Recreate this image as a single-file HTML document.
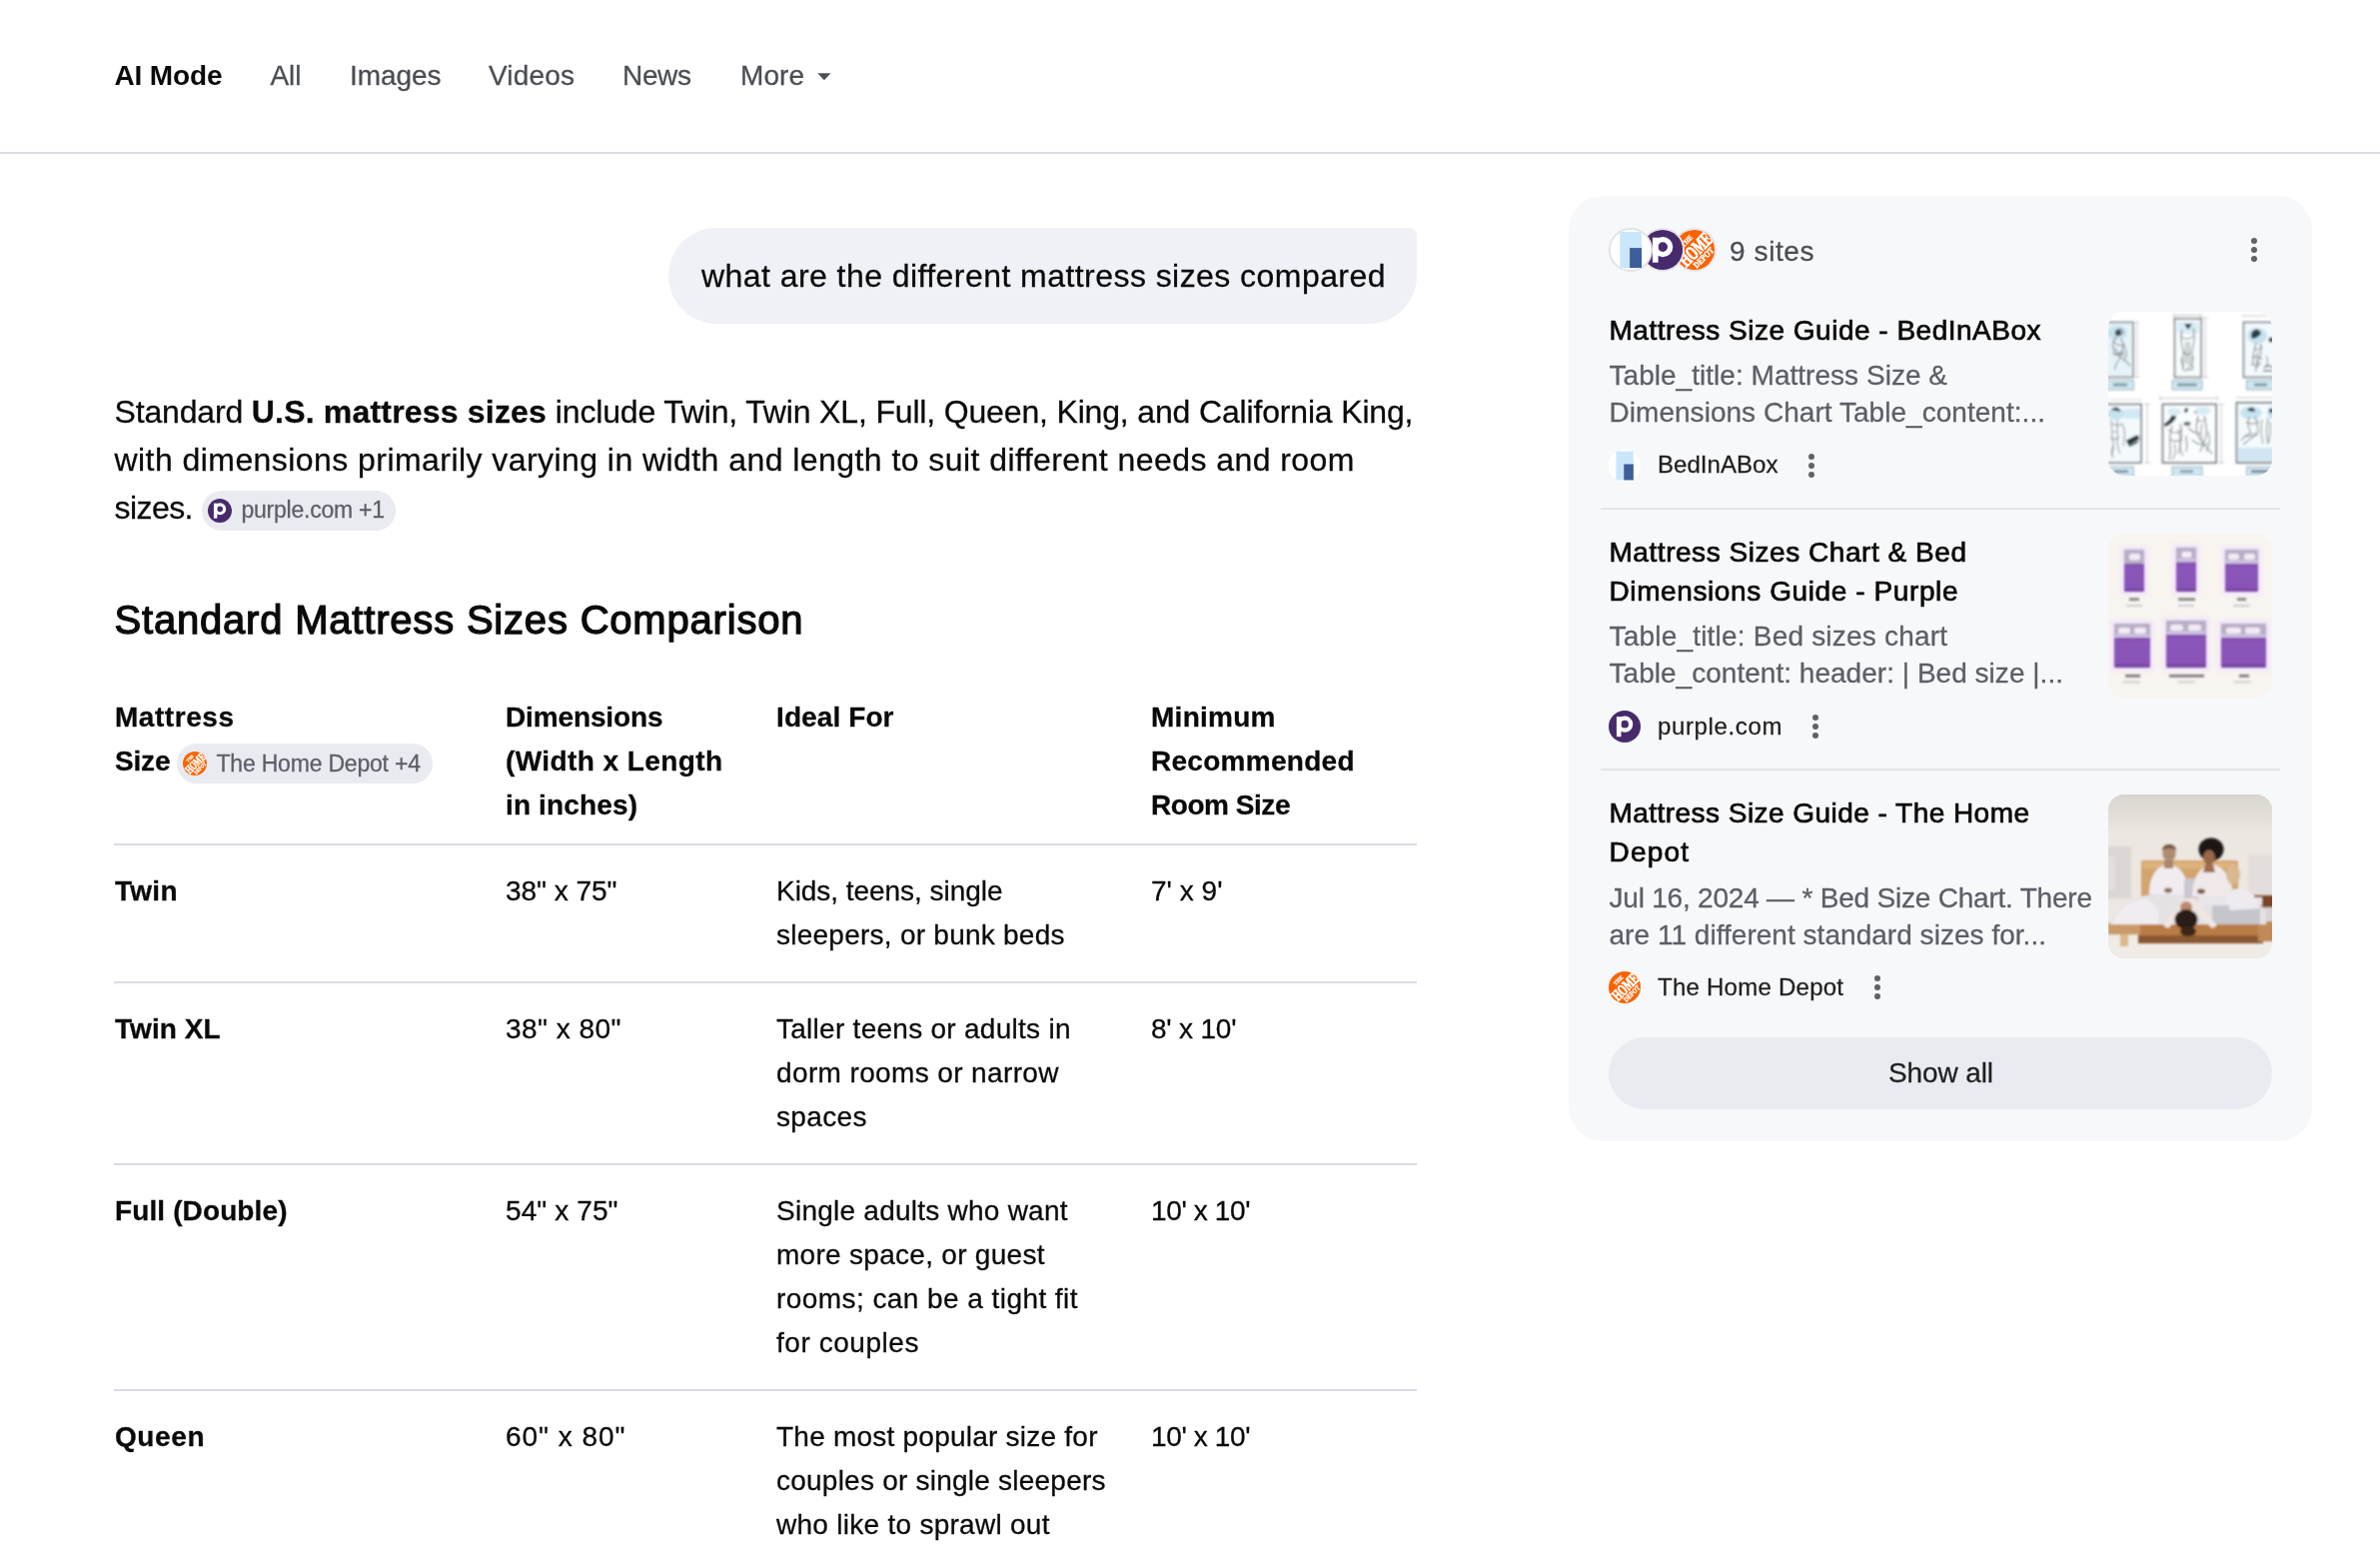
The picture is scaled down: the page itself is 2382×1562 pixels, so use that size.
<!DOCTYPE html>
<html lang="en">
<head>
<meta charset="utf-8">
<title>what are the different mattress sizes compared - AI Mode</title>
<style>
html,body{margin:0;padding:0;background:#fff;}
body{width:2382px;height:1562px;position:relative;overflow:hidden;font-family:"Liberation Sans",Arial,sans-serif;}
.t{position:absolute;white-space:nowrap;line-height:1;margin:0;padding:0;}
#page{position:absolute;left:0;top:0;width:2382px;height:1562px;will-change:transform;}
.abs{position:absolute;}
.hr{position:absolute;height:2px;background:#dadbe7;}
.chip{position:absolute;height:40px;border-radius:20px;background:#e9ebf0;}
.panel{position:absolute;left:1570px;top:196px;width:744px;height:946px;border-radius:34px;background:#f7f8fa;}
.thumb{position:absolute;left:2110px;width:164px;height:164px;border-radius:16px;overflow:hidden;}
.thumb svg{display:block;}
.fav{position:absolute;border-radius:50%;overflow:hidden;}
.dots{position:absolute;width:8px;height:28px;}
.dots i{position:absolute;left:1px;width:6px;height:6px;border-radius:50%;background:#5f6368;}
.dots i:nth-child(1){top:0;} .dots i:nth-child(2){top:9px;} .dots i:nth-child(3){top:18px;}
</style>
</head>
<body>
<div id="page">
<svg width="0" height="0" style="position:absolute">
  <defs>
    <symbol id="ic-purple" viewBox="-20 -20 40 40">
      <circle r="20" fill="#472a6c"/>
      <circle cx="0.2" cy="-2.9" r="7.45" fill="none" stroke="#fff" stroke-width="5.3"/>
      <rect x="-10.1" y="-12.3" width="5.7" height="25" fill="#fff"/>
    </symbol>
    <symbol id="ic-hd" viewBox="-20 -20 40 40">
      <clipPath id="hdclip"><circle r="20"/></clipPath>
      <circle r="20" fill="#fa6304"/>
      <g clip-path="url(#hdclip)"><g transform="rotate(-45)" fill="#fff" stroke="#fff" stroke-width="0.45" font-family="'Liberation Serif',serif" font-weight="700" text-anchor="middle">
        <text x="0.5" y="-9.4" font-size="7.2" stroke-width="0.3" textLength="13.5" lengthAdjust="spacingAndGlyphs">THE</text>
        <text x="0.8" y="6.8" font-size="19.6" stroke-width="0.95" textLength="38.5" lengthAdjust="spacingAndGlyphs">HOME</text>
        <text x="0.8" y="14.8" font-size="9.0" stroke-width="0.4" textLength="25" lengthAdjust="spacingAndGlyphs">DEPOT</text>
      </g></g>
    </symbol>
    <symbol id="ic-bed" viewBox="-20 -20 40 40">
      <circle r="20" fill="#fff"/>
      <rect x="-10.7" y="-18" width="21.7" height="36" fill="#c9e6fb"/>
      <rect x="-0.9" y="-1.9" width="11.9" height="19.9" fill="#3d5d9b"/>
    </symbol>
  </defs>
</svg>

<!-- top nav -->
<div class="hr" style="left:0;top:152px;width:2382px;background:#dadce8;"></div>
<svg class="abs" style="left:818px;top:73px" width="14" height="8" viewBox="0 0 14 8"><path d="M0.3 0.2h13.2L6.9 7.2z" fill="#4d5156"/></svg>

<!-- query bubble -->
<div class="abs" style="left:669px;top:228px;width:749px;height:96px;border-radius:48px 8px 48px 48px;background:#eff1f6;"></div>

<!-- citation chips -->
<div class="chip" style="left:202px;top:491px;width:194px;"></div>
<svg class="abs" style="left:208px;top:499px" width="24" height="24"><use href="#ic-purple"/></svg>
<div class="chip" style="left:177px;top:744px;width:256px;"></div>
<svg class="abs" style="left:183px;top:752px" width="24" height="24"><use href="#ic-hd"/></svg>

<!-- table rules -->
<div class="hr" style="left:114px;top:844px;width:1304px;"></div>
<div class="hr" style="left:114px;top:982px;width:1304px;"></div>
<div class="hr" style="left:114px;top:1164px;width:1304px;"></div>
<div class="hr" style="left:114px;top:1390px;width:1304px;"></div>

<!-- sources panel -->
<div class="panel"></div>
<svg class="abs" style="left:1608px;top:226px" width="114" height="48" viewBox="1608 226 114 48">
  <circle cx="1696" cy="250" r="21" fill="none" stroke="#e5e6ed" stroke-width="2"/>
  <use href="#ic-hd" x="1676" y="230" width="40" height="40"/>
  <circle cx="1664" cy="250" r="21" fill="none" stroke="#e5e5ed" stroke-width="2"/>
  <use href="#ic-purple" x="1644" y="230" width="40" height="40"/>
  <circle cx="1632" cy="250" r="21" fill="#fff" stroke="#e2e1e9" stroke-width="2"/>
  <use href="#ic-bed" x="1612" y="230" width="40" height="40"/>
</svg>
<div class="dots" style="left:2252px;top:238px;"><i></i><i></i><i></i></div>

<div class="hr" style="left:1602px;top:508px;width:680px;background:#e4e5eb;"></div>
<div class="hr" style="left:1602px;top:769px;width:680px;background:#e4e5eb;"></div>

<svg class="abs" style="left:1610px;top:450px" width="32" height="32"><use href="#ic-bed"/></svg>
<div class="dots" style="left:1809px;top:454px;"><i></i><i></i><i></i></div>
<svg class="abs" style="left:1610px;top:711px" width="32" height="32"><use href="#ic-purple"/></svg>
<div class="dots" style="left:1813px;top:715px;"><i></i><i></i><i></i></div>
<svg class="abs" style="left:1610px;top:972px" width="32" height="32"><use href="#ic-hd"/></svg>
<div class="dots" style="left:1875px;top:976px;"><i></i><i></i><i></i></div>

<div class="abs" style="left:1610px;top:1038px;width:664px;height:72px;border-radius:36px;background:#e9ebf0;"></div>

<!-- thumbnail 1: line-art sleeping positions -->
<div class="thumb" style="top:312px;background:#fff;">
<svg width="164" height="164" viewBox="0 0 164 164">
  <defs><filter id="b1" x="-5%" y="-5%" width="110%" height="110%"><feGaussianBlur stdDeviation="0.85"/></filter></defs>
  <rect width="164" height="164" fill="#fff"/>
  <g filter="url(#b1)">
    <!-- bed 1 -->
    <rect x="-6" y="10.5" width="31" height="55" fill="#e6f3f9" stroke="#7f858b" stroke-width="1.6"/>
    <ellipse cx="9" cy="21" rx="10" ry="7" fill="#c6e3f0"/>
    <path d="M29 10v56M25 10.5h6M25 65.5h6" stroke="#c5c8ca" stroke-width="1" fill="none"/>
    <path d="M9 18c4-3 7 1 5 5M8 25c-4 5-5 12 0 17c4 4 9 6 14 12M13 27c3 6 2 12-2 16M4 42c4 2 9 1 12-2" stroke="#8f959a" stroke-width="1.3" fill="none"/>
    <circle cx="10" cy="21" r="3.2" fill="#3c4a52"/>
    <rect x="-4" y="68.5" width="29.5" height="9.5" fill="#cde6f1" stroke="#9fb6c0" stroke-width="1"/>
    <rect x="5" y="71.7" width="14" height="2.6" fill="#7f8f98"/>
    <!-- bed 2 -->
    <path d="M66 2v5M93 2v5M66 3.5h27" stroke="#b9bcbe" stroke-width="1" fill="none"/>
    <rect x="66.5" y="7" width="26.5" height="58.5" fill="#f7fbfd" stroke="#7f858b" stroke-width="1.7"/>
    <rect x="69" y="10" width="21.5" height="12" rx="3" fill="#d9edf5"/>
    <path d="M97 6v60M94 6h6M94 65.5h6" stroke="#c5c8ca" stroke-width="1" fill="none"/>
    <path d="M76 12l4 6l4-6z" fill="#2d3a42"/>
    <path d="M74 18c-2 8-1 14 1 20v18M85 16c2 8 1 16-1 22v16M78 30v22M81 30v24M74 56c2 4 5 4 6 0c2 4 5 3 5-2" stroke="#8f959a" stroke-width="1.2" fill="none"/>
    <rect x="64" y="68.5" width="30" height="9.5" fill="#cde6f1" stroke="#9fb6c0" stroke-width="1"/>
    <rect x="69" y="71.7" width="20" height="2.6" fill="#7f8f98"/>
    <!-- bed 3 -->
    <path d="M134 4h30" stroke="#c5c8ca" stroke-width="1"/>
    <rect x="135.5" y="10.5" width="34" height="55" fill="#f3f9fc" stroke="#7f858b" stroke-width="1.7"/>
    <ellipse cx="149" cy="24" rx="10" ry="8" fill="#c6e3f0"/>
    <path d="M143 22c2-6 9-6 10 0c-3 3-6 6-10 4z" fill="#2f3d47"/>
    <circle cx="163" cy="28" r="2.5" fill="#2f3d47"/>
    <path d="M148 31c-2 8-4 14-3 22M152 32c2 6 1 12-2 18c-2 4-3 8-2 10M144 46c4-2 8-1 10 2" stroke="#8f959a" stroke-width="1.2" fill="none"/>
    <path d="M156 56c2-3 6-3 8 0M155 59h9" stroke="#6c757b" stroke-width="1.4" fill="none"/>
    <rect x="138.5" y="68.5" width="30" height="9.5" fill="#cde6f1" stroke="#9fb6c0" stroke-width="1"/>
    <rect x="146" y="71.7" width="13" height="2.6" fill="#7f8f98"/>
    <!-- bed 4 -->
    <path d="M0 88h34" stroke="#d9d9d6" stroke-width="1"/>
    <rect x="-6" y="92.5" width="39" height="58.5" fill="#f4fafc" stroke="#7f858b" stroke-width="1.8"/>
    <ellipse cx="8" cy="102" rx="9" ry="6" fill="#c6e3f0"/>
    <rect x="16" y="97" width="16" height="10" rx="3" fill="#d3e9f3"/>
    <path d="M3 98c3-4 9-3 9 2z" fill="#3a4850"/>
    <path d="M39 92v60M36 92.5h6M36 151h6" stroke="#c5c8ca" stroke-width="1" fill="none"/>
    <path d="M3 108c1 8 0 14 2 22c1 6 0 10-2 14M9 108c0 8 1 14 0 20c0 6 1 10 3 14M3 120h7" stroke="#a0a5a8" stroke-width="1.2" fill="none"/>
    <path d="M19 129l10-5l1.5 3l-10 5.5zM21 134.5l9-4.5" stroke="#27343b" stroke-width="1.6" fill="#27343b"/>
    <rect x="-4" y="155" width="29.5" height="12" fill="#cde6f1" stroke="#9fb6c0" stroke-width="1"/>
    <rect x="6" y="158.5" width="14" height="2.6" fill="#7f8f98"/>
    <!-- bed 5 -->
    <path d="M52 84v5M109 84v5M52 86.5h57" stroke="#c5c8ca" stroke-width="1" fill="none"/>
    <rect x="54.5" y="92.5" width="53.5" height="58.5" fill="#fafdfe" stroke="#7f858b" stroke-width="1.9"/>
    <path d="M113 92v60M110 92.5h6M110 151h6" stroke="#c5c8ca" stroke-width="1" fill="none"/>
    <path d="M56 112c3-2 6-4 7-8c2-2 5-1 5 2c-2 3-5 7-11 9z" fill="#2c3a42"/>
    <ellipse cx="78" cy="98.5" rx="1.8" ry="2.6" fill="#2c3a42" transform="rotate(25 78 98.5)"/>
    <path d="M86 101c2-5 9-5 10 0c-3 1-7 1-10 0z" fill="#2c3a42"/>
    <ellipse cx="79" cy="112" rx="3.5" ry="2.2" fill="#6b7379"/>
    <path d="M64 114c-2 8-3 16-2 22c1 5 0 8-1 12M72 112c2 8 2 14 0 20c-1 5 1 9 3 12M62 128c4 2 8 2 12 0" stroke="#8f959a" stroke-width="1.3" fill="none"/>
    <path d="M90 104c-2 8-3 14 0 20c3 6 8 12 14 18M96 104c2 8 3 14 2 20c-1 6-4 10-6 16M80 116c4 4 8 6 12 6M78 124c0 6 2 10 0 16" stroke="#8f959a" stroke-width="1.3" fill="none"/>
    <rect x="64" y="155" width="30" height="12" fill="#cde6f1" stroke="#9fb6c0" stroke-width="1"/>
    <rect x="72" y="158.5" width="13" height="2.6" fill="#8b9aa2"/>
    <!-- bed 6 -->
    <path d="M128 86h40" stroke="#c9ccce" stroke-width="1.2"/>
    <rect x="128.5" y="91" width="42" height="60" fill="#f5fafc" stroke="#7f858b" stroke-width="1.9"/>
    <ellipse cx="143" cy="101" rx="11" ry="6.5" fill="#c6e3f0"/>
    <ellipse cx="165" cy="101" rx="6" ry="6.5" fill="#c6e3f0"/>
    <path d="M139 99c2-5 8-4 8 1z" fill="#33424b"/>
    <circle cx="163" cy="99" r="2.2" fill="#33424b"/>
    <path d="M141 105c-2 8-1 12 2 16c-4 2-8 4-10 8M147 105c2 6 4 12 2 18c-4 2-10 6-14 10M160 106c-2 10-2 18 0 26" stroke="#8f959a" stroke-width="1.2" fill="none"/>
    <rect x="129.5" y="136" width="40" height="13.5" fill="#cfe5f1"/>
    <rect x="138.5" y="155" width="30" height="12" fill="#cde6f1" stroke="#9fb6c0" stroke-width="1"/>
    <rect x="143" y="158.5" width="18" height="2.6" fill="#6f7d85"/>
    <!-- extra sketch density -->
    <g stroke="#8f959a" stroke-width="1.1" fill="none">
      <path d="M6 30c3 4 8 5 11 2M7 36c2 5 6 8 10 8M12 46c-3 4-6 8-5 12M16 34c2 4 3 9 1 14"/>
      <path d="M72 24c2 4 10 4 13 0M76 40c1 4 5 4 6 0M73 46c0 4 1 8 3 10M85 44c0 5-1 9-3 12"/>
      <path d="M146 36c3 3 7 2 8-2M143 52c3 2 7 2 10-1M150 40c-2 6-2 12 0 16M158 44c2 4 2 8 0 12"/>
      <path d="M4 112c3 2 7 2 10 0M2 126c3 2 6 2 9 0M14 112c3 6 3 14 1 22M5 134c-2 4-2 8 0 12"/>
      <path d="M60 118c4 4 10 4 14 0M66 132c2 6 1 12-2 16M70 118c3 8 3 16 0 24M88 108c4 2 8 2 10-1M84 128c4 4 10 6 16 4M94 112c-2 8-1 16 2 22M100 120c2 6 2 14-2 20"/>
      <path d="M138 110c4 3 10 3 13-1M136 124c4 1 9 0 12-3M154 108c-2 8-1 16 1 24M162 110c1 8 0 16-2 22"/>
    </g>
    <g fill="#d8ecf5"><ellipse cx="95" cy="99" rx="8" ry="4"/><ellipse cx="66" cy="100" rx="7" ry="4"/></g>

  </g>
</svg>
</div>

<!-- thumbnail 2: purple bed size chart -->
<div class="thumb" style="top:534px;background:#f8f4ef;">
<svg width="164" height="164" viewBox="0 0 164 164">
  <defs>
    <filter id="b2" x="-10%" y="-10%" width="120%" height="120%"><feGaussianBlur stdDeviation="1.0"/></filter>
    <filter id="b2h" x="-30%" y="-30%" width="160%" height="160%"><feGaussianBlur stdDeviation="2.2"/></filter>
    <linearGradient id="pg" x1="0" y1="0" x2="0" y2="1"><stop offset="0" stop-color="#7d4aa8"/><stop offset="0.12" stop-color="#8b55b9"/><stop offset="0.86" stop-color="#8a53b8"/><stop offset="1" stop-color="#6a3d96"/></linearGradient>
  </defs>
  <rect width="164" height="164" fill="#f8f4ef"/>
  <g filter="url(#b2h)" fill="#f1e4fb">
    <rect x="13" y="13" width="26" height="48"/><rect x="65" y="11" width="26" height="50"/><rect x="114" y="13" width="39" height="48"/>
    <rect x="3" y="87" width="42" height="50"/><rect x="55" y="84" width="46" height="53"/><rect x="110" y="87" width="51" height="50"/>
  </g>
  <g filter="url(#b2)">
    <!-- row 1 -->
    <rect x="16" y="16" width="20" height="15" fill="#b8afc6"/><rect x="16" y="30" width="20" height="28" rx="1.5" fill="url(#pg)"/>
    <rect x="21" y="20" width="11" height="6.5" rx="2.5" fill="#f1ecf6"/>
    <rect x="68" y="14" width="20" height="15" fill="#b8afc6"/><rect x="68" y="28" width="20" height="30" rx="1.5" fill="url(#pg)"/>
    <rect x="73.5" y="18" width="10" height="6" rx="2" fill="#f1ecf6"/><rect x="69" y="25" width="18" height="3.5" fill="#cfc2e2"/>
    <rect x="117" y="16" width="33" height="15" fill="#b8afc6"/><rect x="117" y="30" width="33" height="28" rx="1.5" fill="url(#pg)"/>
    <rect x="120" y="20" width="11" height="6" rx="2.5" fill="#f1ecf6"/><rect x="136" y="20" width="11" height="6" rx="2.5" fill="#f1ecf6"/><rect x="118" y="26.5" width="31" height="3.5" fill="#cfc2e2"/>
    <!-- row 2 -->
    <rect x="6" y="90" width="36" height="15" fill="#b8afc6"/><rect x="6" y="104" width="36" height="30" rx="1.5" fill="url(#pg)"/>
    <rect x="10" y="94" width="12" height="6" rx="2.5" fill="#f1ecf6"/><rect x="26" y="94" width="12" height="6" rx="2.5" fill="#f1ecf6"/><rect x="7" y="100.5" width="34" height="3.5" fill="#cfc2e2"/>
    <rect x="58" y="87" width="40" height="15" fill="#b8afc6"/><rect x="58" y="101" width="40" height="33" rx="1.5" fill="url(#pg)"/>
    <rect x="62" y="91" width="13" height="6" rx="2.5" fill="#f1ecf6"/><rect x="80" y="91" width="13" height="6" rx="2.5" fill="#f1ecf6"/><rect x="59" y="97.5" width="38" height="3.5" fill="#cfc2e2"/>
    <rect x="113" y="90" width="45" height="15" fill="#b8afc6"/><rect x="113" y="104" width="45" height="30" rx="1.5" fill="url(#pg)"/>
    <rect x="118" y="94" width="15" height="6" rx="2.5" fill="#f1ecf6"/><rect x="137" y="94" width="15" height="6" rx="2.5" fill="#f1ecf6"/><rect x="114" y="100.5" width="43" height="3.5" fill="#cfc2e2"/>
  </g>
  <g filter="url(#b2)" fill="#77737b">
    <rect x="21" y="64.5" width="10" height="2.4"/><rect x="70" y="64.5" width="17" height="2.4"/><rect x="129" y="64.5" width="9" height="2.4"/>
    <rect x="17" y="141" width="15" height="2.6"/><rect x="61" y="141" width="35" height="2.6"/><rect x="131" y="141" width="10" height="2.6"/>
  </g>
  <g filter="url(#b2)" fill="#cfcbce">
    <rect x="18" y="71" width="16" height="2"/><rect x="70" y="71" width="16" height="2"/><rect x="125" y="71" width="17" height="2"/>
    <rect x="15" y="147.5" width="17" height="2"/><rect x="70" y="147.5" width="17" height="2"/><rect x="126" y="147.5" width="17" height="2"/>
  </g>
</svg>
</div>

<!-- thumbnail 3: family on bed (photo approximation) -->
<div class="thumb" style="top:795px;background:#e6e1db;">
<svg width="164" height="164" viewBox="0 0 164 164">
  <defs>
    <filter id="b3" x="-10%" y="-10%" width="120%" height="120%"><feGaussianBlur stdDeviation="1.6"/></filter>
    <filter id="b3s" x="-10%" y="-10%" width="120%" height="120%"><feGaussianBlur stdDeviation="1.25"/></filter>
    <linearGradient id="wall" x1="0" y1="0" x2="0" y2="1"><stop offset="0" stop-color="#d8d4ce"/><stop offset="0.25" stop-color="#ece7e1"/><stop offset="0.6" stop-color="#ece7e1"/><stop offset="1" stop-color="#efebe7"/></linearGradient>
  </defs>
  <rect width="164" height="164" fill="url(#wall)"/>
  <g filter="url(#b3)">
    <rect x="-5" y="52" width="28" height="52" fill="#dad6d3"/>
    <rect x="-5" y="62" width="12" height="34" fill="#e3dfde"/>
    <rect x="140" y="60" width="30" height="45" fill="#e3dedb"/>
    <rect x="-5" y="146" width="175" height="25" fill="#efece8"/>
  </g>
  <g filter="url(#b3s)">
    <!-- headboard -->
    <rect x="33" y="66" width="97" height="40" rx="2" fill="#d2a46e"/>
    <rect x="35" y="68" width="93" height="6" fill="#deb27c"/>
    <!-- side table -->
    <rect x="146" y="101" width="22" height="13" fill="#7b4628"/>
    <rect x="146" y="113" width="22" height="16" fill="#d9d4d2"/>
    <rect x="151" y="122" width="3" height="20" fill="#5a3a2a"/>
    <!-- bed frame -->
    <rect x="30" y="127" width="140" height="16" fill="#b97b45"/>
    <rect x="30" y="141" width="125" height="8" fill="#8a5932"/>
    <rect x="150" y="127" width="20" height="20" fill="#c08a58"/>
    <rect x="12" y="138" width="8" height="14" fill="#ddb88c"/>
    <rect x="0" y="128" width="32" height="12" fill="#c89a6a"/>
    <!-- bedding -->
    <path d="M2 128c8-16 22-26 44-28h84c12 2 22 8 28 18v12H2z" fill="#e5e2e4"/>
    <path d="M4 130c4-14 16-24 34-26c10 6 14 14 12 26z" fill="#f1ecef"/>
    <rect x="104" y="109" width="48" height="21" fill="#c5c5cb"/>
    <rect x="92" y="103" width="62" height="8" fill="#e9e6ea"/>
    <path d="M118 100c8-8 20-8 26 0c4 6 6 10 8 14l-30 2z" fill="#eeebf0"/>
    <!-- man -->
    <path d="M41 100c0-16 6-28 18-30c12 0 20 10 22 30z" fill="#f0ecf1"/>
    <path d="M56 66h9v8h-9z" fill="#a98467"/>
    <ellipse cx="61" cy="59" rx="6.6" ry="8" fill="#b08b6e"/>
    <path d="M54 56c0-8 14-8 14 0c-4-3-10-3-14 0z" fill="#6d5443"/>
    <rect x="76" y="84" width="14" height="22" rx="4" fill="#c9c7cf"/>
    <!-- woman -->
    <path d="M84 102c0-16 6-30 20-32c12 2 18 12 22 32z" fill="#efe9ea"/>
    <ellipse cx="103" cy="55" rx="12.5" ry="11.5" fill="#1d1716"/>
    <ellipse cx="101" cy="63" rx="6" ry="7.5" fill="#99674a"/>
    <path d="M97 70h8l2 8h-12z" fill="#a06d4e"/>
    <ellipse cx="125" cy="80" rx="7" ry="10" fill="#d9b88f"/>
    <!-- hands -->
    <ellipse cx="60" cy="96" rx="4" ry="2.4" fill="#8c6a55"/>
    <ellipse cx="93" cy="97" rx="4" ry="2.4" fill="#7d5440"/>
    <!-- child upside-down -->
    <path d="M55 131l22-27h10l22 27l-5 3l-22-22l-22 22z" fill="#efe6e4"/>
    <ellipse cx="78" cy="113" rx="6" ry="6" fill="#b98a6c"/>
    <ellipse cx="78" cy="125" rx="11.5" ry="10" fill="#2a1c18"/>
    <ellipse cx="80" cy="137" rx="8" ry="5" fill="#3a2519"/>
  </g>
</svg>
</div>


<div class="t" id="t0" style="left:114.50px;top:62.30px;font-size:28px;font-weight:700;color:#0a0a0a;letter-spacing:-0.148px; ">AI Mode</div>
<div class="t" id="t1" style="left:270.50px;top:62.30px;font-size:28px;font-weight:400;color:#4a4e54;letter-spacing:-0.062px;-webkit-text-stroke:0.28px currentColor;">All</div>
<div class="t" id="t2" style="left:350.00px;top:62.30px;font-size:28px;font-weight:400;color:#4a4e54;letter-spacing:-0.066px;-webkit-text-stroke:0.28px currentColor;">Images</div>
<div class="t" id="t3" style="left:489.00px;top:62.30px;font-size:28px;font-weight:400;color:#4a4e54;letter-spacing:0.178px;-webkit-text-stroke:0.28px currentColor;">Videos</div>
<div class="t" id="t4" style="left:623.00px;top:62.30px;font-size:28px;font-weight:400;color:#4a4e54;letter-spacing:-0.339px;-webkit-text-stroke:0.28px currentColor;">News</div>
<div class="t" id="t5" style="left:741.00px;top:62.30px;font-size:28px;font-weight:400;color:#4a4e54;letter-spacing:0.068px;-webkit-text-stroke:0.28px currentColor;">More</div>
<div class="t" id="t6" style="left:702.00px;top:259.91px;font-size:32px;font-weight:400;color:#0a0a0a;letter-spacing:0.442px;-webkit-text-stroke:0.28px currentColor;">what are the different mattress sizes compared</div>
<div class="t" id="t7" style="left:114.50px;top:395.91px;font-size:32px;font-weight:400;color:#0a0a0a;letter-spacing:-0.163px;-webkit-text-stroke:0.28px currentColor;">Standard <b style="letter-spacing:0.187px">U.S. mattress sizes</b> include Twin, Twin XL, Full, Queen, King, and California King,</div>
<div class="t" id="t8" style="left:114.50px;top:443.91px;font-size:32px;font-weight:400;color:#0a0a0a;letter-spacing:0.440px;-webkit-text-stroke:0.28px currentColor;">with dimensions primarily varying in width and length to suit different needs and room</div>
<div class="t" id="t9" style="left:114.50px;top:491.91px;font-size:32px;font-weight:400;color:#0a0a0a;letter-spacing:-0.559px;-webkit-text-stroke:0.28px currentColor;">sizes.</div>
<div class="t" id="t10" style="left:241.50px;top:498.53px;font-size:23px;font-weight:400;color:#5b5f66;letter-spacing:-0.241px;-webkit-text-stroke:0.28px currentColor;">purple.com +1</div>
<div class="t" id="t11" style="left:114.50px;top:600.14px;font-size:40px;font-weight:400;color:#0a0a0a;letter-spacing:0.803px;-webkit-text-stroke:1.25px currentColor;">Standard Mattress Sizes Comparison</div>
<div class="t" id="t12" style="left:115.00px;top:704.30px;font-size:28px;font-weight:700;color:#0a0a0a;letter-spacing:0.547px;-webkit-text-stroke:0.28px currentColor;">Mattress</div>
<div class="t" id="t13" style="left:115.00px;top:748.30px;font-size:28px;font-weight:700;color:#0a0a0a;letter-spacing:-0.177px;-webkit-text-stroke:0.28px currentColor;">Size</div>
<div class="t" id="t14" style="left:216.50px;top:752.53px;font-size:23px;font-weight:400;color:#5b5f66;letter-spacing:-0.204px;-webkit-text-stroke:0.28px currentColor;">The Home Depot +4</div>
<div class="t" id="t15" style="left:506.00px;top:704.30px;font-size:28px;font-weight:700;color:#0a0a0a;letter-spacing:-0.134px;-webkit-text-stroke:0.28px currentColor;">Dimensions</div>
<div class="t" id="t16" style="left:506.00px;top:748.30px;font-size:28px;font-weight:700;color:#0a0a0a;letter-spacing:0.410px;-webkit-text-stroke:0.28px currentColor;">(Width x Length</div>
<div class="t" id="t17" style="left:506.00px;top:792.30px;font-size:28px;font-weight:700;color:#0a0a0a;letter-spacing:0.144px;-webkit-text-stroke:0.28px currentColor;">in inches)</div>
<div class="t" id="t18" style="left:777.00px;top:704.30px;font-size:28px;font-weight:700;color:#0a0a0a;letter-spacing:0.100px;-webkit-text-stroke:0.28px currentColor;">Ideal For</div>
<div class="t" id="t19" style="left:1152.00px;top:704.30px;font-size:28px;font-weight:700;color:#0a0a0a;letter-spacing:0.268px;-webkit-text-stroke:0.28px currentColor;">Minimum</div>
<div class="t" id="t20" style="left:1152.00px;top:748.30px;font-size:28px;font-weight:700;color:#0a0a0a;letter-spacing:0.278px;-webkit-text-stroke:0.28px currentColor;">Recommended</div>
<div class="t" id="t21" style="left:1152.00px;top:792.30px;font-size:28px;font-weight:700;color:#0a0a0a;letter-spacing:-0.455px;-webkit-text-stroke:0.28px currentColor;">Room Size</div>
<div class="t" id="t22" style="left:115.00px;top:878.30px;font-size:28px;font-weight:700;color:#0a0a0a;letter-spacing:0.271px;-webkit-text-stroke:0.28px currentColor;">Twin</div>
<div class="t" id="t23" style="left:506.00px;top:878.30px;font-size:28px;font-weight:400;color:#0a0a0a;letter-spacing:-0.029px;-webkit-text-stroke:0.28px currentColor;">38" x 75"</div>
<div class="t" id="t24" style="left:777.00px;top:878.30px;font-size:28px;font-weight:400;color:#0a0a0a;letter-spacing:-0.042px;-webkit-text-stroke:0.28px currentColor;">Kids, teens, single</div>
<div class="t" id="t25" style="left:777.00px;top:922.30px;font-size:28px;font-weight:400;color:#0a0a0a;letter-spacing:0.249px;-webkit-text-stroke:0.28px currentColor;">sleepers, or bunk beds</div>
<div class="t" id="t26" style="left:1152.00px;top:878.30px;font-size:28px;font-weight:400;color:#0a0a0a;letter-spacing:0.016px;-webkit-text-stroke:0.28px currentColor;">7' x 9'</div>
<div class="t" id="t27" style="left:115.00px;top:1016.30px;font-size:28px;font-weight:700;color:#0a0a0a;letter-spacing:0.042px;-webkit-text-stroke:0.28px currentColor;">Twin XL</div>
<div class="t" id="t28" style="left:506.00px;top:1016.30px;font-size:28px;font-weight:400;color:#0a0a0a;letter-spacing:0.471px;-webkit-text-stroke:0.28px currentColor;">38" x 80"</div>
<div class="t" id="t29" style="left:777.00px;top:1016.30px;font-size:28px;font-weight:400;color:#0a0a0a;letter-spacing:0.273px;-webkit-text-stroke:0.28px currentColor;">Taller teens or adults in</div>
<div class="t" id="t30" style="left:777.00px;top:1060.30px;font-size:28px;font-weight:400;color:#0a0a0a;letter-spacing:0.373px;-webkit-text-stroke:0.28px currentColor;">dorm rooms or narrow</div>
<div class="t" id="t31" style="left:777.00px;top:1104.30px;font-size:28px;font-weight:400;color:#0a0a0a;letter-spacing:0.356px;-webkit-text-stroke:0.28px currentColor;">spaces</div>
<div class="t" id="t32" style="left:1152.00px;top:1016.30px;font-size:28px;font-weight:400;color:#0a0a0a;letter-spacing:-0.210px;-webkit-text-stroke:0.28px currentColor;">8' x 10'</div>
<div class="t" id="t33" style="left:115.00px;top:1198.30px;font-size:28px;font-weight:700;color:#0a0a0a;letter-spacing:0.118px;-webkit-text-stroke:0.28px currentColor;">Full (Double)</div>
<div class="t" id="t34" style="left:506.00px;top:1198.30px;font-size:28px;font-weight:400;color:#0a0a0a;letter-spacing:0.096px;-webkit-text-stroke:0.28px currentColor;">54" x 75"</div>
<div class="t" id="t35" style="left:777.00px;top:1198.30px;font-size:28px;font-weight:400;color:#0a0a0a;letter-spacing:0.243px;-webkit-text-stroke:0.28px currentColor;">Single adults who want</div>
<div class="t" id="t36" style="left:777.00px;top:1242.30px;font-size:28px;font-weight:400;color:#0a0a0a;letter-spacing:0.288px;-webkit-text-stroke:0.28px currentColor;">more space, or guest</div>
<div class="t" id="t37" style="left:777.00px;top:1286.30px;font-size:28px;font-weight:400;color:#0a0a0a;letter-spacing:0.436px;-webkit-text-stroke:0.28px currentColor;">rooms; can be a tight fit</div>
<div class="t" id="t38" style="left:777.00px;top:1330.30px;font-size:28px;font-weight:400;color:#0a0a0a;letter-spacing:0.553px;-webkit-text-stroke:0.28px currentColor;">for couples</div>
<div class="t" id="t39" style="left:1152.00px;top:1198.30px;font-size:28px;font-weight:400;color:#0a0a0a;letter-spacing:-0.381px;-webkit-text-stroke:0.28px currentColor;">10' x 10'</div>
<div class="t" id="t40" style="left:115.00px;top:1424.30px;font-size:28px;font-weight:700;color:#0a0a0a;letter-spacing:0.590px;-webkit-text-stroke:0.28px currentColor;">Queen</div>
<div class="t" id="t41" style="left:506.00px;top:1424.30px;font-size:28px;font-weight:400;color:#0a0a0a;letter-spacing:0.971px;-webkit-text-stroke:0.28px currentColor;">60" x 80"</div>
<div class="t" id="t42" style="left:777.00px;top:1424.30px;font-size:28px;font-weight:400;color:#0a0a0a;letter-spacing:0.232px;-webkit-text-stroke:0.28px currentColor;">The most popular size for</div>
<div class="t" id="t43" style="left:777.00px;top:1468.30px;font-size:28px;font-weight:400;color:#0a0a0a;letter-spacing:0.230px;-webkit-text-stroke:0.28px currentColor;">couples or single sleepers</div>
<div class="t" id="t44" style="left:777.00px;top:1512.30px;font-size:28px;font-weight:400;color:#0a0a0a;letter-spacing:0.277px;-webkit-text-stroke:0.28px currentColor;">who like to sprawl out</div>
<div class="t" id="t45" style="left:1152.00px;top:1424.30px;font-size:28px;font-weight:400;color:#0a0a0a;letter-spacing:-0.381px;-webkit-text-stroke:0.28px currentColor;">10' x 10'</div>
<div class="t" id="t46" style="left:1731.00px;top:237.80px;font-size:28px;font-weight:400;color:#4a4e54;letter-spacing:0.594px;-webkit-text-stroke:0.28px currentColor;">9 sites</div>
<div class="t" id="t47" style="left:1610.50px;top:317.30px;font-size:28px;font-weight:400;color:#0a0a0a;letter-spacing:0.497px;-webkit-text-stroke:0.7px currentColor;">Mattress Size Guide - BedInABox</div>
<div class="t" id="t48" style="left:1610.50px;top:362.30px;font-size:28px;font-weight:400;color:#5b5f66;letter-spacing:0.030px;-webkit-text-stroke:0.28px currentColor;">Table_title: Mattress Size &amp;</div>
<div class="t" id="t49" style="left:1610.50px;top:399.30px;font-size:28px;font-weight:400;color:#5b5f66;letter-spacing:0.037px;-webkit-text-stroke:0.28px currentColor;">Dimensions Chart Table_content:...</div>
<div class="t" id="t50" style="left:1659.00px;top:453.18px;font-size:24px;font-weight:400;color:#1f1f1f;letter-spacing:0.051px;-webkit-text-stroke:0.28px currentColor;">BedInABox</div>
<div class="t" id="t51" style="left:1610.50px;top:539.30px;font-size:28px;font-weight:400;color:#0a0a0a;letter-spacing:0.544px;-webkit-text-stroke:0.7px currentColor;">Mattress Sizes Chart &amp; Bed</div>
<div class="t" id="t52" style="left:1610.50px;top:578.30px;font-size:28px;font-weight:400;color:#0a0a0a;letter-spacing:0.600px;-webkit-text-stroke:0.7px currentColor;">Dimensions Guide - Purple</div>
<div class="t" id="t53" style="left:1610.50px;top:623.30px;font-size:28px;font-weight:400;color:#5b5f66;letter-spacing:0.201px;-webkit-text-stroke:0.28px currentColor;">Table_title: Bed sizes chart</div>
<div class="t" id="t54" style="left:1610.50px;top:660.30px;font-size:28px;font-weight:400;color:#5b5f66;letter-spacing:0.027px;-webkit-text-stroke:0.28px currentColor;">Table_content: header: | Bed size |...</div>
<div class="t" id="t55" style="left:1659.00px;top:715.18px;font-size:24px;font-weight:400;color:#1f1f1f;letter-spacing:0.641px;-webkit-text-stroke:0.28px currentColor;">purple.com</div>
<div class="t" id="t56" style="left:1610.50px;top:799.80px;font-size:28px;font-weight:400;color:#0a0a0a;letter-spacing:0.459px;-webkit-text-stroke:0.7px currentColor;">Mattress Size Guide - The Home</div>
<div class="t" id="t57" style="left:1610.50px;top:838.80px;font-size:28px;font-weight:400;color:#0a0a0a;letter-spacing:1.195px;-webkit-text-stroke:0.7px currentColor;">Depot</div>
<div class="t" id="t58" style="left:1610.50px;top:884.80px;font-size:28px;font-weight:400;color:#5b5f66;letter-spacing:-0.211px;-webkit-text-stroke:0.28px currentColor;">Jul 16, 2024 — * Bed Size Chart. There</div>
<div class="t" id="t59" style="left:1610.50px;top:921.80px;font-size:28px;font-weight:400;color:#5b5f66;letter-spacing:0.032px;-webkit-text-stroke:0.28px currentColor;">are 11 different standard sizes for...</div>
<div class="t" id="t60" style="left:1659.00px;top:976.18px;font-size:24px;font-weight:400;color:#1f1f1f;letter-spacing:0.249px;-webkit-text-stroke:0.28px currentColor;">The Home Depot</div>
<div class="t" id="t61" style="left:1890.00px;top:1060.30px;font-size:28px;font-weight:400;color:#1f1f1f;letter-spacing:-0.121px;-webkit-text-stroke:0.28px currentColor;">Show all</div>
</div>
</body>
</html>
